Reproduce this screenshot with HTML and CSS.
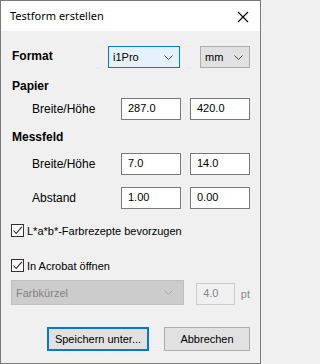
FILE: index.html
```html
<!DOCTYPE html>
<html>
<head>
<meta charset="utf-8">
<link rel="stylesheet" href="styles.css">
</head>
<body>
<div class="window">
  <div class="titlebar">
    <span class="title">Testform erstellen</span>
    <svg class="close" width="12" height="12" viewBox="0 0 12 12"><path d="M1 1 L11 11 M11 1 L1 11" stroke="#000" stroke-width="1.1" fill="none"/></svg>
  </div>
  <div class="content">
    <div class="row format-row">
      <span class="heading">Format</span>
      <div class="combo combo-focus"><span>i1Pro</span><svg class="chev" width="9" height="5" viewBox="0 0 9 5"><path d="M0.5 0.5 L4.5 4.5 L8.5 0.5" stroke="#444" fill="none"/></svg></div>
      <div class="combo combo-small"><span>mm</span><svg class="chev" width="9" height="5" viewBox="0 0 9 5"><path d="M0.5 0.5 L4.5 4.5 L8.5 0.5" stroke="#444" fill="none"/></svg></div>
    </div>
    <div class="heading section papier">Papier</div>
    <div class="row field-row r1">
      <span class="label">Breite/Höhe</span>
      <div class="input">287.0</div>
      <div class="input">420.0</div>
    </div>
    <div class="heading section messfeld">Messfeld</div>
    <div class="row field-row r2">
      <span class="label">Breite/Höhe</span>
      <div class="input">7.0</div>
      <div class="input">14.0</div>
    </div>
    <div class="row field-row r3">
      <span class="label">Abstand</span>
      <div class="input">1.00</div>
      <div class="input">0.00</div>
    </div>
    <div class="check c1">
      <span class="box"><svg width="11" height="11" viewBox="0 0 11 11"><path d="M1.5 5.5 L4.2 8.5 L9.8 1.8" stroke="#222" stroke-width="1.1" fill="none"/></svg></span>
      <span>L*a*b*-Farbrezepte bevorzugen</span>
    </div>
    <div class="check c2">
      <span class="box"><svg width="11" height="11" viewBox="0 0 11 11"><path d="M1.5 5.5 L4.2 8.5 L9.8 1.8" stroke="#222" stroke-width="1.1" fill="none"/></svg></span>
      <span>In Acrobat öffnen</span>
    </div>
    <div class="row disabled-row">
      <div class="combo combo-disabled"><span>Farbkürzel</span><svg class="chev" width="9" height="5" viewBox="0 0 9 5"><path d="M0.5 0.5 L4.5 4.5 L8.5 0.5" stroke="#a8a8a8" fill="none"/></svg></div>
      <div class="input input-disabled">4.0</div>
      <span class="unit">pt</span>
    </div>
    <div class="row buttons">
      <div class="btn btn-default">Speichern unter...</div>
      <div class="btn btn-cancel">Abbrechen</div>
    </div>
  </div>
</div>
</body>
</html>
```

FILE: styles.css
```css
html, body {
  margin: 0;
  padding: 0;
  background: #f0f0f0;
}
.window {
  width: 261px;
  height: 364px;
  box-sizing: border-box;
  border: 1px solid #7a7a7a;
  background: #f0f0f0;
  font-family: "Liberation Sans", Arial, sans-serif;
  font-size: 11px;
  color: #000;
  display: flex;
  flex-direction: column;
}
.titlebar {
  height: 30px;
  background: #fff;
  display: flex;
  align-items: center;
  justify-content: space-between;
  padding: 0 11px 0 9px;
  flex-shrink: 0;
}
.title {
  font-family: "Noto Sans", "Open Sans", sans-serif;
  font-size: 11px;
  padding-bottom: 1px;
}
.close {
  display: block;
  margin-top: 1px;
}
.content {
  padding: 0 10px 0 11px;
  flex: 1;
}
.row {
  display: flex;
  align-items: center;
}
.heading {
  font-weight: bold;
  font-size: 12px;
}
.format-row {
  margin-top: 15px;
  height: 22px;
}
.format-row .heading {
  width: 96px;
  margin-top: -3px;
}
.combo {
  box-sizing: border-box;
  height: 22px;
  display: flex;
  align-items: center;
  justify-content: space-between;
  padding: 0 6px 0 4px;
}
.combo-focus {
  width: 72px;
  border: 1px solid #0078d7;
  background: #e5f1fb;
}
.combo-small {
  width: 50px;
  margin-left: 20px;
  border: 1px solid #adadad;
  background: #e1e1e1;
}
.chev {
  display: block;
}
.section {
  height: 14px;
  line-height: 14px;
}
.papier {
  margin-top: 11px;
}
.messfeld {
  margin-top: 10px;
}
.field-row {
  height: 22px;
}
.r1 { margin-top: 5px; }
.r2 { margin-top: 9px; }
.r3 { margin-top: 12px; }
.label {
  width: 89px;
  padding-left: 20px;
  font-size: 12px;
}
.input {
  box-sizing: border-box;
  width: 60px;
  height: 22px;
  border: 1px solid #7a7a7a;
  background: #fff;
  padding: 0 0 0 6px;
  line-height: 18px;
}
.input + .input {
  margin-left: 9px;
}
.check {
  display: flex;
  align-items: center;
  height: 13px;
}
.c1 { margin-top: 15px; }
.c2 { margin-top: 22px; }
.box {
  box-sizing: border-box;
  width: 13px;
  height: 13px;
  border: 1px solid #333;
  background: #fff;
  margin-left: -1px;
  margin-right: 3px;
  display: flex;
  align-items: center;
  justify-content: center;
}
.box svg {
  display: block;
}
.disabled-row {
  margin-top: 8px;
  height: 25px;
}
.combo-disabled {
  width: 175px;
  height: 25px;
  margin-left: -1px;
  border: 1px solid #bfbfbf;
  background: #cccccc;
  color: #838383;
  padding: 0 10px 0 4px;
}
.input-disabled {
  width: 39px;
  margin-left: 12px;
  margin-top: 3px;
  border-color: #cccccc;
  background: #f0f0f0;
  color: #838383;
}
.unit {
  margin-left: 6px;
  color: #8a8a8a;
  margin-top: 2px;
}
.buttons {
  margin-top: 22px;
  justify-content: flex-end;
  gap: 15px;
}
.btn {
  box-sizing: border-box;
  height: 24px;
  background: #e1e1e1;
  display: flex;
  align-items: center;
  justify-content: center;
}
.btn-default {
  width: 102px;
  border: 2px solid #0078d7;
}
.btn-cancel {
  width: 86px;
  border: 1px solid #adadad;
}
```
